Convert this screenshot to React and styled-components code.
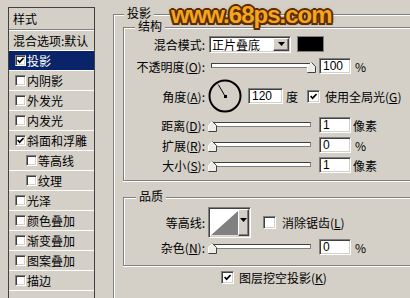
import React from "react";
import styled, { createGlobalStyle, css } from "styled-components";

const GlobalStyle = createGlobalStyle`
  body {
    margin: 0;
    background: #d4d0c8;
    color: #000;
    font-family: "Noto Sans CJK SC", "Noto Sans", sans-serif;
    font-size: 12px;
  }
  * {
    box-sizing: border-box;
  }
`;

// classic win2k bevels
const sunken = css`
  background: #fff;
  border: 1px solid;
  border-color: #808080 #fff #fff #808080;
  box-shadow: inset 1px 1px 0 #404040, inset -1px -1px 0 #d4d0c8;
`;

const raised = css`
  background: #d4d0c8;
  border: 1px solid;
  border-color: #fff #404040 #404040 #fff;
  box-shadow: inset -1px -1px 0 #808080;
`;

const Dialog = styled.div`
  position: relative;
  display: flex;
  align-items: flex-start;
  width: 410px;
  height: 298px;
  overflow: hidden;
  background: #d4d0c8;
`;

/* ---------- left: style list ---------- */

const StyleList = styled.div`
  flex-shrink: 0;
  width: 87px;
  margin: 7px 0 0 8px;
  border: 1px solid #404040;
  border-bottom: none;
`;

const ListHeader = styled.div`
  height: 22px;
  display: flex;
  align-items: center;
  padding-left: 4px;
  border-bottom: 1px solid #808080;
`;

const ListBody = styled.div`
  border-top: 1px solid #fff;
`;

const ListRow = styled.div`
  height: 20px;
  display: flex;
  align-items: center;
  padding-left: ${(p) => p.$indent}px;
  border-bottom: 1px solid #fff;
  background: ${(p) => (p.$active ? "#0a246a" : "transparent")};
  color: ${(p) => (p.$active ? "#fff" : "#000")};
  white-space: nowrap;
`;

const RowText = styled.span`
  margin-left: ${(p) => p.$ml || 0}px;
`;

/* ---------- checkbox ---------- */

const Box = styled.span`
  ${sunken};
  flex-shrink: 0;
  display: inline-flex;
  align-items: center;
  justify-content: center;
  width: ${(p) => p.$size}px;
  height: ${(p) => p.$size}px;
  margin-left: ${(p) => p.$ml || 0}px;
`;

const CheckBox = ({ checked, size = 13, ml }) => (
  <Box $size={size} $ml={ml}>
    {checked && (
      <svg width="7" height="7" viewBox="0 0 7 7">
        <polyline
          points="0.6,3 2.6,5.2 6.6,1"
          fill="none"
          stroke="#000"
          strokeWidth="1.7"
        />
      </svg>
    )}
  </Box>
);

/* ---------- right: settings ---------- */

const Main = styled.div`
  flex-shrink: 0;
  margin: 14px 0 0 18px;
`;

const Group = styled.div`
  position: relative;
  width: ${(p) => p.$w}px;
  margin-top: ${(p) => p.$mt || 0}px;
  padding: ${(p) => p.$pad};
  border-top: 1px solid #808080;
  border-left: 1px solid #808080;
  border-bottom: ${(p) => (p.$open ? "none" : "1px solid #808080")};
  box-shadow: inset 1px 1px 0 #fff
    ${(p) => (p.$open ? "" : ", 0 1px 0 #fff")};
`;

const Legend = styled.span`
  position: absolute;
  top: -8px;
  left: ${(p) => p.$left}px;
  padding: 0 3px;
  line-height: 12px;
  background: #d4d0c8;
`;

const Field = styled.div`
  display: flex;
  align-items: center;
  height: ${(p) => p.$h || 18}px;
  margin-top: ${(p) => p.$mt || 0}px;
  padding-left: ${(p) => p.$pl || 0}px;
  white-space: nowrap;
`;

const FieldLabel = styled.span`
  flex-shrink: 0;
  width: 81px;
  text-align: right;
`;

const Text = styled.span`
  margin-left: ${(p) => p.$ml || 0}px;
`;

const Key = ({ k }) => (
  <>
    (<u>{k}</u>)
  </>
);

const SelectBox = styled.div`
  ${sunken};
  display: flex;
  align-items: stretch;
  justify-content: space-between;
  width: 82px;
  height: 17px;
  margin-left: 4px;
  padding: 1px 1px 1px 2px;
  line-height: 13px;
`;

const DropBtn = styled.div`
  ${raised};
  display: flex;
  align-items: ${(p) => (p.$top ? "flex-start" : "center")};
  justify-content: center;
  width: ${(p) => p.$w}px;
  padding-top: ${(p) => (p.$top ? 8 : 0)}px;
`;

const Arrow = () => (
  <svg width="7" height="4" viewBox="0 0 7 4">
    <polygon points="0,0 7,0 3.5,4" fill="#000" />
  </svg>
);

const Swatch = styled.div`
  width: 27px;
  height: 16px;
  margin-left: 6px;
  background: #000;
  border: 1px solid #808080;
`;

const SliderWrap = styled.div`
  position: relative;
  width: 108px;
  height: 18px;
  margin-left: 3px;
  padding: 6px 5px 0 3px;
`;

const Track = styled.div`
  height: 5px;
  background: #fff;
  border: 1px solid;
  border-color: #404040 #808080 #808080 #404040;
`;

const Thumb = styled.svg`
  position: absolute;
  top: 5px;
`;

const Slider = ({ value }) => (
  <SliderWrap>
    <Track />
    <Thumb
      width="9"
      height="11"
      viewBox="0 0 9 11"
      style={{ left: value * 0.99 }}
    >
      <polygon points="0.5,4.5 4.5,0.5 8.5,4.5 8.5,10.5 0.5,10.5" fill="#eeece8" />
      <polyline points="0.5,10 0.5,4.5 4.5,0.5" fill="none" stroke="#fff" />
      <polyline points="4.5,0.5 8.5,4.5 8.5,10.5 0.5,10.5" fill="none" stroke="#404040" />
    </Thumb>
  </SliderWrap>
);

const NumInput = styled.div`
  ${sunken};
  display: flex;
  align-items: center;
  width: ${(p) => p.$w || 32}px;
  height: 16px;
  margin-left: ${(p) => p.$ml || 3}px;
  padding-left: 3px;
  font-family: "Liberation Sans", sans-serif;
`;

const Dial = () => (
  <svg width="34" height="34" viewBox="0 0 34 34" style={{ marginLeft: 3 }}>
    <circle cx="17" cy="17" r="15.5" fill="none" stroke="#000" strokeWidth="2" />
    <line x1="17" y1="17" x2="10.3" y2="5.6" stroke="#000" strokeWidth="1" />
    <rect x="16" y="16" width="3" height="3" fill="#000" />
  </svg>
);

const ContourBox = styled.div`
  ${sunken};
  display: flex;
  align-items: stretch;
  width: 43px;
  height: 31px;
  margin-left: 3px;
  padding: 1px;
`;

const Watermark = styled.div`
  position: absolute;
  left: 171px;
  top: 3px;
  font-family: "Liberation Sans", Arial, sans-serif;
  font-weight: 700;
  font-size: 24px;
  line-height: 24px;
  letter-spacing: -1px;
  color: #f5a51e;
  text-shadow: -2px 0 #5a2c00, 2px 0 #5a2c00, 0 -2px #5a2c00, 0 2px #5a2c00,
    -1.5px -1.5px #5a2c00, 1.5px -1.5px #5a2c00, -1.5px 1.5px #5a2c00,
    1.5px 1.5px #5a2c00, 0 0 4px #c88a3a;
`;

const styles = [
  { name: "投影", checked: true, active: true },
  { name: "内阴影" },
  { name: "外发光" },
  { name: "内发光" },
  { name: "斜面和浮雕", checked: true },
  { name: "等高线", sub: true },
  { name: "纹理", sub: true },
  { name: "光泽" },
  { name: "颜色叠加" },
  { name: "渐变叠加" },
  { name: "图案叠加" },
  { name: "描边" },
];

export default function App() {
  return (
    <Dialog>
      <GlobalStyle />
      <StyleList>
        <ListHeader>样式</ListHeader>
        <ListBody>
          <ListRow $indent={4}>混合选项:默认</ListRow>
          {styles.map((s) => (
            <ListRow key={s.name} $indent={s.sub ? 17 : 6} $active={s.active}>
              <CheckBox checked={s.checked} size={11} />
              <RowText $ml={1}>{s.name}</RowText>
            </ListRow>
          ))}
          <ListRow $indent={6} />
        </ListBody>
      </StyleList>

      <Main>
        <Group $w={310} $pad="12px 0 40px 9px" $open>
          <Legend $left={10}>投影</Legend>

          <Group $w={300} $pad="7px 0 6px 0">
            <Legend $left={11}>结构</Legend>
            <Field>
              <FieldLabel>混合模式:</FieldLabel>
              <SelectBox>
                正片叠底
                <DropBtn $w={16}>
                  <Arrow />
                </DropBtn>
              </SelectBox>
              <Swatch />
            </Field>
            <Field $mt={4}>
              <FieldLabel>
                不透明度<Key k="O" />:
              </FieldLabel>
              <Slider value={100} />
              <NumInput>100</NumInput>
              <Text $ml={4}>%</Text>
            </Field>
            <Field $mt={4} $h={34}>
              <FieldLabel>
                角度<Key k="A" />:
              </FieldLabel>
              <Dial />
              <NumInput $w={35} $ml={6}>
                120
              </NumInput>
              <Text $ml={3}>度</Text>
              <CheckBox checked ml={9} />
              <Text $ml={5}>
                使用全局光<Key k="G" />
              </Text>
            </Field>
            <Field $mt={3}>
              <FieldLabel>
                距离<Key k="D" />:
              </FieldLabel>
              <Slider value={0} />
              <NumInput>1</NumInput>
              <Text $ml={2}>像素</Text>
            </Field>
            <Field $mt={2}>
              <FieldLabel>
                扩展<Key k="R" />:
              </FieldLabel>
              <Slider value={0} />
              <NumInput>0</NumInput>
              <Text $ml={4}>%</Text>
            </Field>
            <Field $mt={2}>
              <FieldLabel>
                大小<Key k="S" />:
              </FieldLabel>
              <Slider value={0} />
              <NumInput>1</NumInput>
              <Text $ml={2}>像素</Text>
            </Field>
          </Group>

          <Group $w={300} $mt={16} $pad="9px 0 9px 0">
            <Legend $left={12}>品质</Legend>
            <Field $h={31}>
              <FieldLabel>等高线:</FieldLabel>
              <ContourBox>
                <svg width="30" height="27" viewBox="0 0 30 27">
                  <rect width="30" height="27" fill="#fff" />
                  <polygon points="1,27 30,1 30,27" fill="#808080" />
                </svg>
                <DropBtn $w={11} $top>
                  <Arrow />
                </DropBtn>
              </ContourBox>
              <CheckBox ml={12} />
              <Text $ml={6}>
                消除锯齿<Key k="L" />
              </Text>
            </Field>
            <Field>
              <FieldLabel>
                杂色<Key k="N" />:
              </FieldLabel>
              <Slider value={0} />
              <NumInput>0</NumInput>
              <Text $ml={4}>%</Text>
            </Field>
          </Group>

          <Field $mt={2} $pl={98}>
            <CheckBox checked />
            <Text $ml={5}>
              图层挖空投影<Key k="K" />
            </Text>
          </Field>
        </Group>
      </Main>

      <Watermark>www.68ps.com</Watermark>
    </Dialog>
  );
}
